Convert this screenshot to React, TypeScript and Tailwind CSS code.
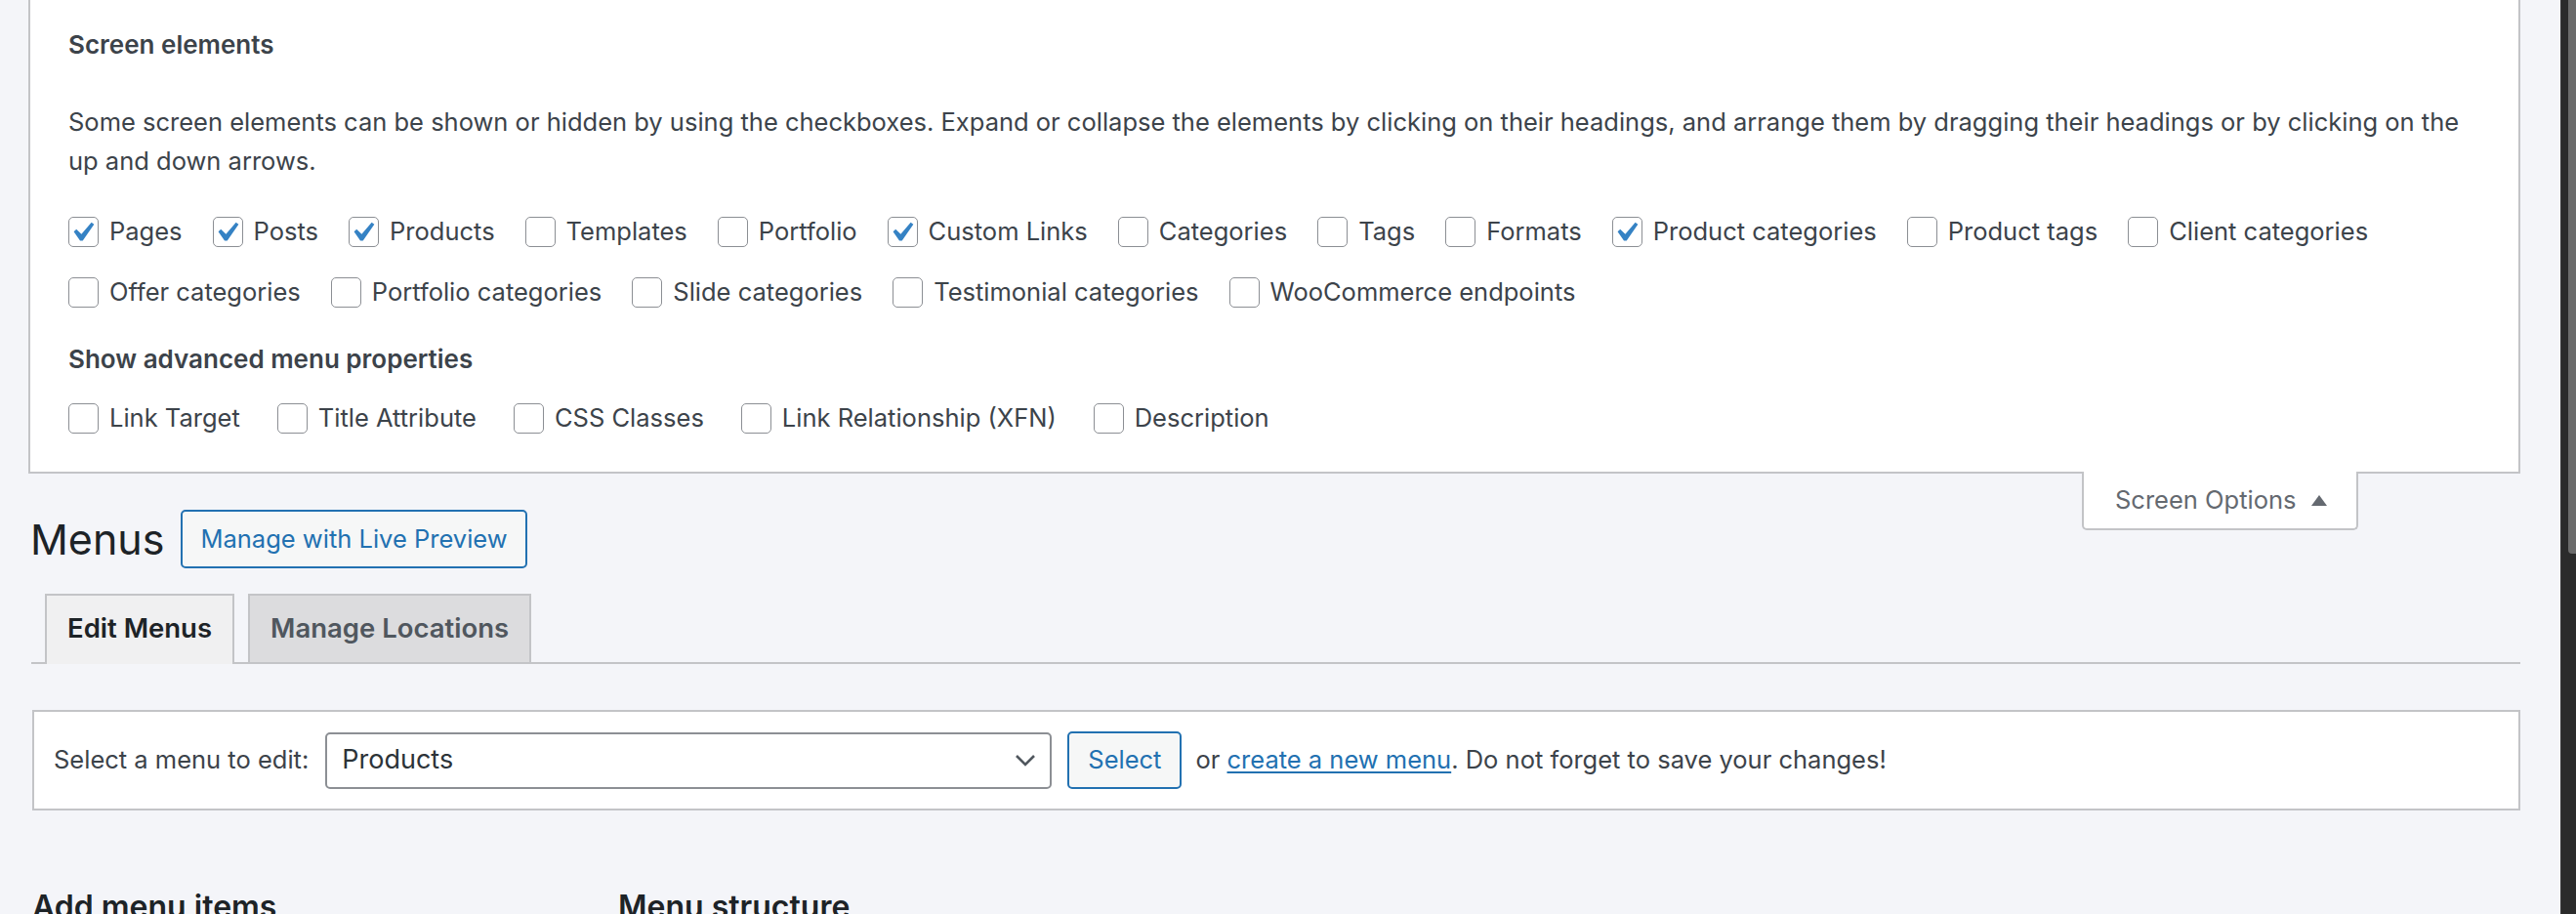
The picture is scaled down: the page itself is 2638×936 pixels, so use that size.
import React from "react";

const checkPath = "M14.83 4.89l1.34.94-5.81 8.38H9.02L5.78 9.67l1.34-1.25 2.57 2.4z";

type Item = { label: string; checked?: boolean };

const elementsRow1: Item[] = [
  { label: "Pages", checked: true },
  { label: "Posts", checked: true },
  { label: "Products", checked: true },
  { label: "Templates" },
  { label: "Portfolio" },
  { label: "Custom Links", checked: true },
  { label: "Categories" },
  { label: "Tags" },
  { label: "Formats" },
  { label: "Product categories", checked: true },
  { label: "Product tags" },
  { label: "Client categories" },
];

const elementsRow2: Item[] = [
  { label: "Offer categories" },
  { label: "Portfolio categories" },
  { label: "Slide categories" },
  { label: "Testimonial categories" },
  { label: "WooCommerce endpoints" },
];

const advanced: Item[] = [
  { label: "Link Target" },
  { label: "Title Attribute" },
  { label: "CSS Classes" },
  { label: "Link Relationship (XFN)" },
  { label: "Description" },
];

function Checkbox({ checked }: { checked?: boolean }) {
  return (
    <span className="relative inline-block h-[31px] w-[31px] shrink-0 rounded-[5px] border-[1.5px] border-[#8c8f94] bg-white">
      {checked && (
        <svg
          viewBox="0 0 20 20"
          className="absolute left-[-7px] top-[-5px] h-[40px] w-[40px]"
          fill="#3582c4"
        >
          <path d={checkPath} />
        </svg>
      )}
    </span>
  );
}

function CheckRow({ items, wide }: { items: Item[]; wide?: boolean }) {
  return (
    <div className={`flex h-[44px] items-center ${wide ? "gap-[38px]" : "gap-[31px]"}`}>
      {items.map((it) => (
        <label key={it.label} className="flex items-center gap-[11px] text-[25.5px] whitespace-nowrap">
          <Checkbox checked={it.checked} />
          <span>{it.label}</span>
        </label>
      ))}
    </div>
  );
}

export default function App() {
  return (
    <div className="flex h-[936px] w-full overflow-hidden bg-[#f4f5f9] font-['Inter',sans-serif] text-[#3c434a]">
      <div className="min-w-0 flex-1 pl-[29px] pr-[41px]">
        {/* Screen options panel */}
        <div className="relative">
          <div className="border-x-2 border-b-2 border-[#c3c4c7] bg-white pb-[33px] pl-[39px] pt-[25px]">
            <div className="flex h-[40px] items-center text-[26px] font-semibold">Screen elements</div>
            <p className="mt-[40px] text-[25.5px] leading-[40px]">
              Some screen elements can be shown or hidden by using the checkboxes. Expand or collapse the elements by
              clicking on their headings, and arrange them by dragging their headings or by clicking on the
              <br />
              up and down arrows.
            </p>
            <div className="mt-[30px]">
              <CheckRow items={elementsRow1} />
            </div>
            <div className="mt-[18px]">
              <CheckRow items={elementsRow2} />
            </div>
            <div className="mt-[26px] flex h-[40px] items-center text-[26px] font-semibold">
              Show advanced menu properties
            </div>
            <div className="mt-[19px]">
              <CheckRow items={advanced} wide />
            </div>
          </div>
          <div className="absolute right-[166px] top-full -mt-[2px] flex h-[60px] w-[283px] items-center gap-[15px] rounded-b-[5px] border-x-2 border-b-2 border-[#c3c4c7] bg-white pl-[32px] text-[25.5px] text-[#646970]">
            <span>Screen Options</span>
            <svg viewBox="0 0 16 11" className="h-[11px] w-[16px]" fill="#646970">
              <path d="M8 0L16 11H0z" />
            </svg>
          </div>
        </div>

        {/* Heading */}
        <div className="mt-[37px] flex h-[60px] items-center">
          <h1 className="ml-[2px] text-[43px] font-normal leading-none text-[#1d2327]">Menus</h1>
          <button className="ml-[17px] h-[60px] rounded-[5px] border-2 border-[#2271b1] bg-[#f6f7f7] px-[18px] text-[25.5px] text-[#2271b1]">
            Manage with Live Preview
          </button>
        </div>

        {/* Tabs */}
        <div className="ml-[3px] mt-[26px] flex items-end gap-[14px] border-b-2 border-[#c3c4c7] pl-[14px]">
          <div className="-mb-[2px] flex h-[72px] items-center border-2 border-b-0 border-[#c3c4c7] bg-[#f0f0f1] px-[21px] pb-[2px] text-[27.5px] font-semibold text-[#1d2327]">
            Edit Menus
          </div>
          <div className="flex h-[70px] items-center border-2 border-b-0 border-[#c3c4c7] bg-[#dcdcde] px-[21px] text-[27.5px] font-semibold text-[#50575e]">
            Manage Locations
          </div>
        </div>

        {/* Select menu */}
        <div className="ml-[4px] mt-[47px] flex h-[103px] items-center border-2 border-[#c3c4c7] bg-white pl-[20px] text-[25.5px]">
          <span className="whitespace-nowrap">Select a menu to edit:</span>
          <div className="ml-[17px] flex h-[58px] w-[744px] shrink-0 items-center justify-between rounded-[5px] border-2 border-[#8c8f94] bg-white pl-[15px] pr-[14px] text-[27px] text-[#2c3338]">
            <span>Products</span>
            <svg viewBox="0 0 22 13" className="h-[13px] w-[22px]" fill="none" stroke="#50575e" strokeWidth="2.6">
              <path d="M2 2l9 9 9-9" />
            </svg>
          </div>
          <button className="ml-[16px] h-[59px] shrink-0 rounded-[5px] border-2 border-[#2271b1] bg-[#f6f7f7] px-[19px] text-[25.5px] text-[#2271b1]">
            Select
          </button>
          <span className="ml-[14px] whitespace-nowrap">
            or{" "}
            <a className="text-[#2271b1] underline underline-offset-[3px]" href="#">
              create a new menu
            </a>
            . Do not forget to save your changes!
          </span>
        </div>

        {/* Bottom headings */}
        <div className="ml-[4px] mt-[83px] flex text-[32px] font-semibold leading-none text-[#1d2327]">
          <h2 className="w-[600px]">Add menu items</h2>
          <h2>Menu structure</h2>
        </div>
      </div>

      {/* Scrollbar */}
      <div className="flex w-[16px] shrink-0 justify-end border-l border-[#3a3a3a] bg-[#2b2b2b]">
        <div className="h-[567px] w-[8px] rounded-bl-[4px] bg-[#6b6b6b]" />
      </div>
    </div>
  );
}
